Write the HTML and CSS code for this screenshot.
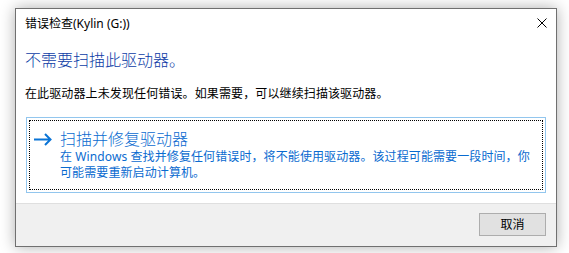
FILE: index.html
```html
<!DOCTYPE html>
<html lang="zh-CN">
<head>
<meta charset="utf-8">
<title>错误检查</title>
<link rel="stylesheet" href="styles.css">
</head>
<body>
<div class="window">
  <div class="titlebar">
    <span class="title">错误检查(Kylin (G:))</span>
    <svg class="close" width="10" height="10" viewBox="0 0 10 10"><path d="M0.5 0.5 L9.5 9.5 M9.5 0.5 L0.5 9.5" stroke="#000" stroke-width="1" fill="none"/></svg>
  </div>
  <div class="content">
    <div class="instruction">不需要扫描此驱动器。</div>
    <div class="body-text">在此驱动器上未发现任何错误。如果需要，可以继续扫描该驱动器。</div>
    <div class="cmdlink">
      <div class="focus">
        <svg class="arrow" width="18" height="20" viewBox="0 0 18 20"><path d="M0 10.5 H16.5 M11 5 L16.5 10.5 L11 16" stroke="#0a74d6" stroke-width="2" fill="none"/></svg>
        <div class="cmd-text">
          <div class="cmd-title">扫描并修复驱动器</div>
          <div class="cmd-desc">在 Windows 查找并修复任何错误时，将不能使用驱动器。该过程可能需要一段时间，你可能需要重新启动计算机。</div>
        </div>
      </div>
    </div>
  </div>
  <div class="footer">
    <button class="btn">取消</button>
  </div>
</div>
</body>
</html>
```
FILE: styles.css
```css
html, body {
  margin: 0;
  padding: 0;
}
body {
  background: #ffffff;
  width: 569px;
  height: 253px;
  overflow: hidden;
  font-family: "Noto Sans", "Noto Sans CJK SC", sans-serif;
  font-size: 12px;
  color: #000;
}
.window {
  box-sizing: border-box;
  margin: 8px 0 0 15px;
  width: 542px;
  height: 239px;
  border: 1px solid #707070;
  background: #fff;
  box-shadow: 0 0 14px rgba(0, 0, 0, 0.32);
  display: flex;
  flex-direction: column;
}
.titlebar {
  height: 30px;
  display: flex;
  align-items: center;
  justify-content: space-between;
  padding: 0 9px;
}
.title {
  font-size: 12px;
  line-height: 30px;
}
.close {
  display: block;
  margin-top: -2px;
}
.content {
  flex: 1;
  padding: 11px 9px 0 9px;
}
.instruction {
  font-size: 16px;
  line-height: 20px;
  font-weight: 300;
  color: #0c3ca6;
}
.body-text {
  margin-top: 16px;
  line-height: 16px;
  letter-spacing: 0.12px;
}
.cmdlink {
  margin: 15px 0 0 1px;
  width: 520px;
  box-sizing: border-box;
  border: 1px solid #92c6ee;
  padding: 2px;
}
.focus {
  border: 1px dotted #000;
  display: flex;
  align-items: flex-start;
  padding: 8px 0 8px 4px;
}
.arrow {
  display: block;
  flex: none;
  margin-right: 8px;
}
.cmd-text {
  width: 474px;
  color: #0a6bd0;
}
.cmd-title {
  font-size: 16px;
  line-height: 20px;
  font-weight: 300;
}
.cmd-desc {
  line-height: 16px;
  letter-spacing: 0.1px;
}
.footer {
  background: #f0f0f0;
  border-top: 1px solid #dfdfdf;
  display: flex;
  justify-content: flex-end;
  align-items: flex-start;
  padding: 9px 10px 0 0;
  box-sizing: content-box;
  height: 33px;
}
.btn {
  width: 67px;
  height: 23px;
  box-sizing: border-box;
  border: 1px solid #adadad;
  background: #e1e1e1;
  font-family: "Noto Sans", "Noto Sans CJK SC", sans-serif;
  font-size: 12px;
  color: #000;
  padding: 0;
  line-height: 21px;
}
```
